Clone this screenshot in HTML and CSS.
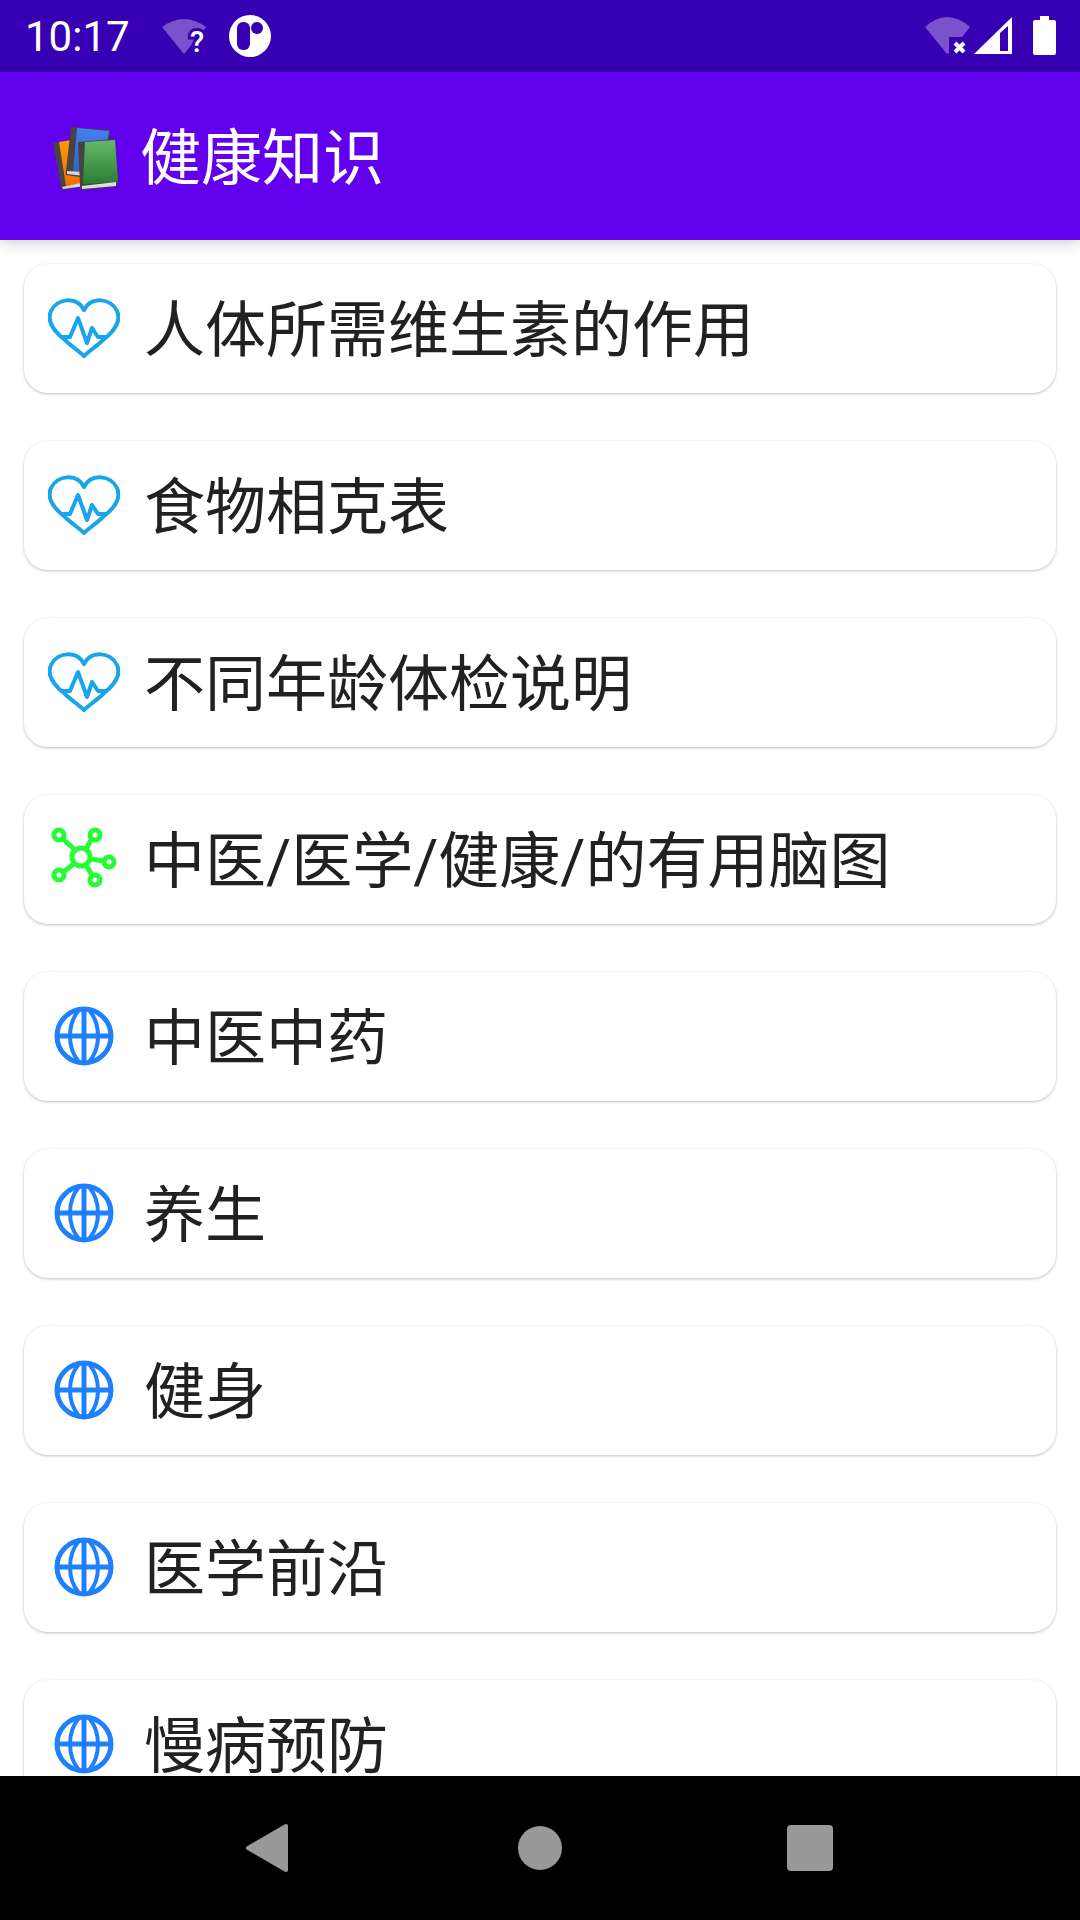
FILE: index.html
```html
<!DOCTYPE html>
<html lang="zh-CN">
<head>
<meta charset="utf-8">
<meta name="viewport" content="width=device-width, initial-scale=1">
<title>健康知识</title>
<link rel="stylesheet" href="styles.css">
</head>
<body>
<svg width="0" height="0" class="sprite" aria-hidden="true">
  <symbol id="heart" viewBox="0 0 72 72">
    <g fill="none" stroke="#18a5ec" stroke-width="4" stroke-linejoin="round" stroke-linecap="round">
      <path d="M36 17C29 3 9 5 3 18C-2 29 8 40 17 47C23 53 31 58 36 63C41 58 49 53 55 47C64 40 74 29 69 18C63 5 43 3 36 17Z"/>
      <path d="M14 44H22L30 25L39 50L44 35L50 44H58"/>
    </g>
  </symbol>
  <symbol id="mindmap" viewBox="0 0 72 72">
    <g fill="none" stroke="#26fc35" stroke-width="5">
      <circle cx="33" cy="33" r="9"/>
      <path d="M15 15L27 26M43 16L38 25M42 35L56 37M38 41L44 51M26 40L15 48"/>
      <circle cx="11" cy="11" r="5"/><circle cx="47" cy="11" r="5"/>
      <circle cx="61" cy="38" r="5"/><circle cx="47" cy="56" r="5"/><circle cx="11" cy="51" r="5"/>
    </g>
  </symbol>
  <symbol id="globe" viewBox="0 0 72 72">
    <g fill="none" stroke="#1f80ff" stroke-width="5">
      <circle cx="36" cy="35" r="27"/>
      <path d="M36 8V62M9 35H63"/>
      <path stroke-width="4" d="M31 9C19 23 19 47 31 61M41 9C53 23 53 47 41 61"/>
    </g>
  </symbol>
</svg>

<header class="status">
  <span class="clock">10:17</span>
  <svg class="wifi-unknown" viewBox="160 12 48 48" aria-hidden="true">
    <path class="faint" d="M162 27Q184 11 206 27L184 54Z"/>
    <text class="badge-text" x="190" y="52">?</text>
  </svg>
  <svg class="app-mark" viewBox="229 15 42 42" aria-hidden="true">
    <circle cx="250" cy="36" r="21" fill="#fff"/>
    <rect class="hole" x="237" y="22" width="13" height="28" rx="6"/>
    <circle class="hole" cx="257" cy="28" r="6"/>
  </svg>
  <svg class="signals" viewBox="924 12 134 48" aria-hidden="true">
    <path class="faint" d="M925 27Q947 7 970 27L962 37H949V53L947 54Z"/>
    <path d="M955 43L964 52M964 43L955 52" stroke="#fff" stroke-width="4"/>
    <path fill="#fff" fill-rule="evenodd" d="M974 54L1012 17V54ZM1000 33V51H1008V26Z"/>
    <path fill="#fff" d="M1040 20V16H1049V20H1054Q1056 20 1056 22V53Q1056 55 1054 55H1035Q1033 55 1033 53V22Q1033 20 1035 20Z"/>
  </svg>
</header>

<div class="appbar">
  <svg class="books" viewBox="48 120 72 72" aria-hidden="true">
    <defs>
      <linearGradient id="green" x2="0" y2="1"><stop stop-color="#66b96a"/><stop offset="1" stop-color="#2b7d31"/></linearGradient>
      <linearGradient id="blue" x2="0" y2="1"><stop stop-color="#447ff0"/><stop offset="1" stop-color="#3560c0"/></linearGradient>
      <linearGradient id="orange" x2="0" y2="1"><stop stop-color="#ff9a00"/><stop offset="1" stop-color="#f46c00"/></linearGradient>
    </defs>
    <path fill="#444" d="M53 143L78 139L92 185L63 190Q61 190 61 187Z"/>
    <path fill="url(#orange)" d="M59 142L78 139L90 182L66 186Z"/>
    <path fill="#d5d5d5" d="M62 187L85 182V186L63 189Z"/>
    <path fill="#444" d="M71 127L110 130V134L101 180L66 175Q65 174 66 171Z"/>
    <path fill="url(#blue)" d="M77 128L109 131L102 173L73 171Z"/>
    <path fill="#d5d5d5" d="M67 171L84 172V176L67 174Z"/>
    <path fill="#444" d="M78 142L115 139L118 183Q118 186 115 187L83 190Q80 190 80 186Z"/>
    <path fill="url(#green)" d="M85 142L115 140L118 182L83 184Z"/>
    <path fill="#dedede" d="M82 186L116 182V186L82 189Z"/>
  </svg>
  <h1 class="title">健康知识</h1>
</div>

<main class="content">
  <ul class="list">
    <li><a class="card" href="#vitamins"><svg class="icon" aria-hidden="true"><use href="#heart"/></svg><span class="label">人体所需维生素的作用</span></a></li>
    <li><a class="card" href="#foods"><svg class="icon" aria-hidden="true"><use href="#heart"/></svg><span class="label">食物相克表</span></a></li>
    <li><a class="card" href="#checkup"><svg class="icon" aria-hidden="true"><use href="#heart"/></svg><span class="label">不同年龄体检说明</span></a></li>
    <li><a class="card" href="#maps"><svg class="icon" aria-hidden="true"><use href="#mindmap"/></svg><span class="label">中医/医学/健康/的有用脑图</span></a></li>
    <li><a class="card" href="#herbs"><svg class="icon" aria-hidden="true"><use href="#globe"/></svg><span class="label">中医中药</span></a></li>
    <li><a class="card" href="#wellness"><svg class="icon" aria-hidden="true"><use href="#globe"/></svg><span class="label">养生</span></a></li>
    <li><a class="card" href="#fitness"><svg class="icon" aria-hidden="true"><use href="#globe"/></svg><span class="label">健身</span></a></li>
    <li><a class="card" href="#frontier"><svg class="icon" aria-hidden="true"><use href="#globe"/></svg><span class="label">医学前沿</span></a></li>
    <li><a class="card" href="#chronic"><svg class="icon" aria-hidden="true"><use href="#globe"/></svg><span class="label">慢病预防</span></a></li>
  </ul>
</main>

<nav class="navbar" aria-label="系统导航">
  <button type="button" aria-label="返回"><svg viewBox="0 0 72 72"><path d="M14 36L52 14V58Z" stroke="#999" stroke-width="4" stroke-linejoin="round"/></svg></button>
  <button type="button" aria-label="主页"><svg viewBox="0 0 72 72"><circle cx="36" cy="36" r="22"/></svg></button>
  <button type="button" aria-label="最近任务"><svg viewBox="0 0 72 72"><rect x="13" y="13" width="46" height="46" rx="4"/></svg></button>
</nav>
</body>
</html>
```
FILE: styles.css
```css
* {
  box-sizing: border-box;
}

body {
  margin: 0;
  height: 100vh;
  display: flex;
  flex-direction: column;
  background: #fff;
  color: #212121;
  font-family: Roboto, "Noto Sans CJK SC", sans-serif;
}

.sprite {
  position: absolute;
}

.status {
  flex: none;
  display: flex;
  align-items: center;
  height: 72px;
  padding: 0 22px 0 25px;
  background: #3700b3;
}

.clock {
  padding-top: 2px;
  color: #fff;
  font-size: 42px;
  line-height: 48px;
}

.wifi-unknown {
  width: 48px;
  height: 48px;
  margin-left: 30px;
}

.app-mark {
  width: 42px;
  height: 42px;
  margin-left: 21px;
}

.signals {
  width: 134px;
  height: 48px;
  margin-left: auto;
}

.faint {
  fill: #7a52cb;
}

.hole {
  fill: #3700b3;
}

.badge-text {
  fill: #fff;
  stroke: #3700b3;
  stroke-width: 6px;
  paint-order: stroke;
  font-size: 29px;
  font-weight: 500;
}

.appbar {
  position: relative;
  flex: none;
  display: flex;
  align-items: center;
  gap: 20px;
  height: 168px;
  padding: 0 48px;
  background: #6200ee;
  color: #fff;
  box-shadow: 0 4px 12px rgba(0, 0, 0, 0.17);
}

.books {
  width: 72px;
  height: 72px;
}

.title {
  margin: 0;
  padding-top: 6px;
  font-size: 61px;
  font-weight: 400;
  line-height: 81px;
}

.content {
  flex: 1;
  min-height: 0;
  overflow: hidden;
}

.list {
  display: grid;
  gap: 48px;
  margin: 0;
  padding: 24px;
  list-style: none;
}

.card {
  display: flex;
  align-items: center;
  gap: 24px;
  height: 129px;
  padding: 0 24px;
  border-radius: 24px;
  background: #fff;
  color: inherit;
  font-size: 61px;
  line-height: 81px;
  text-decoration: none;
  white-space: nowrap;
  box-shadow: 0 1px 3px rgba(0, 0, 0, 0.25);
}

.label {
  padding-top: 6px;
}

.icon {
  flex: none;
  width: 72px;
  height: 72px;
}

.navbar {
  flex: none;
  display: grid;
  grid-template-columns: repeat(3, 1fr);
  height: 144px;
  padding: 0 12.5%;
  background: #000;
}

.navbar button {
  display: grid;
  place-items: center;
  padding: 0;
  border: 0;
  background: none;
}

.navbar svg {
  width: 72px;
  height: 72px;
  fill: #999;
}
```
